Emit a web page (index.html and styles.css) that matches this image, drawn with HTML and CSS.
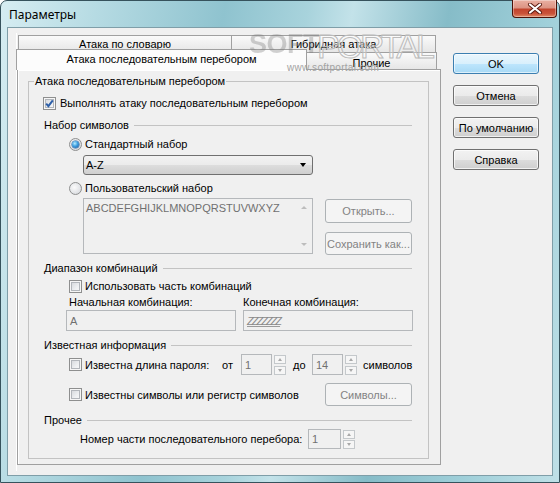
FILE: index.html
```html
<!DOCTYPE html>
<html lang="ru">
<head>
<meta charset="utf-8">
<title>Параметры</title>
<link rel="stylesheet" href="styles.css">
</head>
<body>
<div class="window">
  <div class="titlebar">
    <span class="title">Параметры</span>
    <div class="close">
      <svg width="16" height="11" viewBox="0 0 16 11"><path d="M3 1.5 L13 9.5 M13 1.5 L3 9.5" stroke="#5a1a10" stroke-width="4" stroke-linecap="round"/><path d="M3 1.5 L13 9.5 M13 1.5 L3 9.5" stroke="#ffffff" stroke-width="2.2" stroke-linecap="round"/></svg>
    </div>
  </div>
  <div class="client">
    <div class="sheet">
      <div class="tabs">
        <div class="tabrow back">
          <div class="tab t1">Атака по словарю</div>
          <div class="tab t2">Гибридная атака</div>
        </div>
        <div class="tabrow front">
          <div class="tab sel">Атака последовательным перебором</div>
          <div class="tab t4">Прочие</div>
        </div>
      </div>
      <div class="panel">
        <div class="group">
          <div class="legend">Атака последовательным перебором</div>

          <div class="row r-main">
            <span class="cb checked"><svg width="11" height="11" viewBox="0 0 11 11"><path d="M2.2 5.6 L4.4 8.2 L8.8 2.4" fill="none" stroke="#2d5fa8" stroke-width="2"/></svg></span>
            <span class="lbl first">Выполнять атаку последовательным перебором</span>
          </div>

          <div class="section s1"><span class="stext">Набор символов</span><span class="sline"></span></div>

          <div class="row r-radio1 indent">
            <span class="radio on"><span class="dot"></span></span>
            <span class="lbl first">Стандартный набор</span>
          </div>

          <div class="combo"><span>A-Z</span><span class="arrow"></span></div>

          <div class="row r-radio2 indent">
            <span class="radio"></span>
            <span class="lbl first">Пользовательский набор</span>
          </div>

          <div class="charset">
            <div class="textarea">
              <span class="tatext">ABCDEFGHIJKLMNOPQRSTUVWXYZ</span>
              <div class="vscroll"><span class="sa up"></span><span class="sa down"></span></div>
            </div>
            <div class="sidebtns">
              <div class="btn dis b-open">Открыть...</div>
              <div class="btn dis b-save">Сохранить как...</div>
            </div>
          </div>

          <div class="section s2"><span class="stext">Диапазон комбинаций</span><span class="sline"></span></div>

          <div class="row r-part indent">
            <span class="cb"></span>
            <span class="lbl first">Использовать часть комбинаций</span>
          </div>

          <div class="labels">
            <span class="lab1">Начальная комбинация:</span>
            <span class="lab2">Конечная комбинация:</span>
          </div>

          <div class="inputs">
            <div class="edit e1">A</div>
            <div class="edit e2"><span class="zz">ZZZZZZZ</span></div>
          </div>

          <div class="section s3"><span class="stext">Известная информация</span><span class="sline"></span></div>

          <div class="row r-len indent">
            <span class="cb"></span>
            <span class="lbl first len">Известна длина пароля:</span>
            <span class="lbl from">от</span>
            <div class="edit num n1">1</div>
            <div class="spin"><span class="sp up"></span><span class="sp down"></span></div>
            <span class="lbl to">до</span>
            <div class="edit num n2">14</div>
            <div class="spin"><span class="sp up"></span><span class="sp down"></span></div>
            <span class="lbl sym">символов</span>
          </div>

          <div class="row r-chars indent">
            <span class="cb"></span>
            <span class="lbl first chars">Известны символы или регистр символов</span>
            <div class="btn dis b-sym">Символы...</div>
          </div>

          <div class="section s4"><span class="stext">Прочее</span><span class="sline"></span></div>

          <div class="row r-part2">
            <span class="lbl partlbl">Номер части последовательного перебора:</span>
            <div class="edit num n3">1</div>
            <div class="spin"><span class="sp up"></span><span class="sp down"></span></div>
          </div>
        </div>
      </div>
    </div>
    <div class="buttons">
      <div class="btn def">OK</div>
      <div class="btn">Отмена</div>
      <div class="btn">По умолчанию</div>
      <div class="btn">Справка</div>
    </div>
  </div>
  <div class="watermark">
    <span class="wm-soft">SOFT</span>
    <span class="wm-portal">PORTAL</span>
    <span class="wm-url">www.softportal.com</span>
  </div>
</div>
</body>
</html>
```

FILE: styles.css
```css
* { box-sizing: border-box; }
html, body { margin: 0; padding: 0; }
body {
  width: 560px; height: 483px; overflow: hidden;
  font-family: "Liberation Sans", Arial, sans-serif;
  font-size: 11px; color: #000; background: #ffffff;
}
.window {
  position: relative;
  width: 560px; height: 483px;
  border: 1px solid #36525c;
  border-radius: 7px 7px 0 0;
  background: linear-gradient(100deg, #d6edf2 0%, #b6dbe3 15%, #8fc3cf 35%, #a8d3dc 48%, #c3e2e9 55%, #86bcc8 70%, #9fcfd9 85%, #bfe0e7 100%);
  display: flex; flex-direction: column;
}
.titlebar {
  height: 26px; display: flex; justify-content: space-between; align-items: flex-start;
}
.title {
  margin: 6px 0 0 8px; line-height: 16px;
  font-family: "Noto Sans", "Open Sans", sans-serif; font-size: 12px; color: #000;
}
.close {
  width: 45px; height: 18px; margin: -1px 2px 0 0;
  border: 1px solid #4b1208; border-top: none;
  border-radius: 0 0 4px 4px;
  background: linear-gradient(#eab0a2 0%, #dc9484 45%, #c2452e 55%, #c9533a 80%, #e08a66 100%);
  box-shadow: inset 0 0 0 1px rgba(255,255,255,0.35);
  display: flex; align-items: center; justify-content: center;
}
.client {
  height: 449px; margin: 0 6px; border: 1px solid #7f9ea8;
  background: #f0f0f0;
  display: flex; align-items: flex-start;
}
.sheet {
  width: 425px; height: 438px; margin: 5px 0 0 8px;
  display: flex; flex-direction: column;
  border-left: 1px solid #ffffff;
}
.tabs { height: 36px; display: flex; flex-direction: column; }
.tabrow { display: flex; }
.tabrow.back { margin: 2px 0 0 1px; height: 17px; }
.tabrow.front { margin: -3px 0 0 -1px; height: 20px; position: relative; z-index: 2; align-items: flex-start; }
.tab {
  display: flex; align-items: center; justify-content: center;
  border: 1px solid #a0a0a0; border-bottom: none;
  background: linear-gradient(#fafafa, #e6e6e6);
  height: 100%;
}
.t1 { width: 214px; }
.t2 { width: 205px; margin-left: -1px; }
.sel { width: 291px; height: 21px; background: #fcfcfc; padding-bottom: 3px; }
.t4 { width: 131px; height: 17px; margin-top: 3px; margin-left: -1px; padding-top: 4px; }
.panel {
  border: 1px solid #a0a0a0;
  height: 396px; flex: none;
  background: #f0f0f0;
  box-shadow: inset 1px 1px 0 #ffffff;
  padding: 11px 11px 0 10px;
}
.group {
  border: 1px solid #c3c3c3; height: 378px;
}
.legend {
  display: table; margin: -8px 0 0 5px; padding: 0 1px;
  background: #f0f0f0; line-height: 14px;
}
.row { display: flex; align-items: center; }
.lbl { white-space: nowrap; line-height: 14px; flex: none; }
.indent { padding-left: 40px; }
.lbl.first { margin-left: 3px; }
.r-main { height: 16px; margin-top: 7px; padding-left: 14px; }
.r-main .lbl.first { margin-left: 4px; }
.cb {
  width: 13px; height: 13px; flex: none;
  border: 1px solid #8e8f8f;
  background: linear-gradient(135deg, #cfd2d6 0%, #eef0f2 60%, #fbfbfb 100%);
  box-shadow: inset 0 0 0 1px #f6f6f6, inset 0 0 0 2px #b2b6bb;
  display: flex; align-items: center; justify-content: center;
}
.cb svg { display: block; }
.radio {
  width: 13px; height: 13px; flex: none; border-radius: 50%;
  border: 1px solid #8e8f8f;
  background: radial-gradient(circle at 40% 40%, #fbfbfb 0%, #e2e4e7 60%, #c9cdd2 100%);
  display: flex; align-items: center; justify-content: center;
}
.radio .dot {
  width: 7px; height: 7px; border-radius: 50%;
  background: radial-gradient(circle at 40% 35%, #b8ecff 0%, #3d9ee0 45%, #1b4f93 100%);
  box-shadow: 0 0 0 0.5px #2a5f9e;
}
.section { display: flex; align-items: center; height: 14px; padding: 0 16px 0 15px; }
.stext { white-space: nowrap; line-height: 14px; margin-right: 5px; }
.sline { flex: 1; height: 1px; background: #c3c3c3; }
.s1 { margin-top: 7px; }
.r-radio1 { height: 16px; margin-top: 4px; }
.combo {
  width: 230px; height: 20px; margin: 3px 0 0 54px;
  border: 1px solid #707070; border-radius: 3px;
  background: linear-gradient(#f2f2f2 0%, #ebebeb 50%, #dddddd 51%, #cfcfcf 100%);
  display: flex; align-items: center; justify-content: space-between;
  padding: 0 6px 0 2px;
}
.arrow {
  width: 0; height: 0;
  border-left: 3.5px solid transparent; border-right: 3.5px solid transparent;
  border-top: 4px solid #000;
}
.r-radio2 { height: 16px; margin-top: 5px; }
.charset { display: flex; height: 57px; margin: 2px 0 0 54px; }
.textarea {
  width: 230px; height: 56px; border: 1px solid #b5b8bb; background: #f0f0f0;
  display: flex; justify-content: space-between;
  color: #707070;
}
.tatext { padding: 3px 0 0 2px; line-height: 13px; }
.vscroll { width: 17px; display: flex; flex-direction: column; justify-content: space-between; align-items: center; padding: 7px 0 7px; }
.sa { width: 0; height: 0; border-left: 3.5px solid transparent; border-right: 3.5px solid transparent; }
.sa.up { border-bottom: 3.5px solid #bdbdbd; }
.sa.down { border-top: 3.5px solid #bdbdbd; }
.sidebtns { display: flex; flex-direction: column; margin-left: 12px; }
.btn {
  height: 21px; border: 1px solid #707070; border-radius: 3px;
  background: linear-gradient(#f2f2f2 0%, #ebebeb 50%, #dddddd 51%, #cfcfcf 100%);
  box-shadow: inset 0 0 0 1px rgba(255,255,255,0.7);
  display: flex; align-items: center; justify-content: center; white-space: nowrap;
  flex: none;
}
.btn.dis {
  border-color: #adb2b5; background: #f4f4f4; color: #838383; box-shadow: none;
}
.b-open { width: 87px; height: 24px; margin-top: 1px; }
.b-save { width: 87px; height: 23px; margin-top: 9px; }
.s2 { margin-top: 6px; }
.r-part { height: 16px; margin-top: 3px; }
.labels { display: flex; height: 14px; margin-top: 1px; padding-left: 40px; line-height: 14px; }
.lab1 { width: 174px; }
.inputs { display: flex; height: 21px; margin: 1px 0 0 37px; }
.edit {
  height: 21px; border: 1px solid #b5b8bb; background: #f0f0f0; color: #707070;
  display: flex; align-items: center; padding-left: 3px; white-space: nowrap; flex: none;
}
.e1 { width: 170px; }
.e2 { width: 170px; margin-left: 7px; }
.zz { letter-spacing: -2px; font-style: italic; text-decoration: underline; text-decoration-color: #9a9a9a; color: #8a8a8a; }
.s3 { margin-top: 7px; }
.r-len { height: 21px; margin-top: 2px; }
.len { width: 137px; }
.from { width: 19px; }
.num { width: 31px; height: 21px; }
.spin { display: flex; flex-direction: column; justify-content: space-between; height: 20px; width: 12px; margin-left: 2px; flex: none; }
.sp {
  height: 9px; border: 1px solid #c4c8cb; background: #f6f6f6; position: relative;
}
.sp::after {
  content: ""; position: absolute; left: 2.5px; width: 0; height: 0;
  border-left: 2.5px solid transparent; border-right: 2.5px solid transparent;
}
.sp.up::after { top: 2px; border-bottom: 3px solid #a8a8a8; }
.sp.down::after { top: 2px; border-top: 3px solid #a8a8a8; }
.to { width: 19px; margin-left: 7px; }
.sym { margin-left: 6px; }
.r-chars { height: 23px; margin-top: 8px; }
.chars { width: 240px; }
.b-sym { width: 87px; height: 23px; }
.s4 { margin-top: 7px; }
.r-part2 { height: 20px; margin-top: 2px; padding-left: 51px; }
.partlbl { width: 228px; }
.n3 { width: 33px; height: 20px; }
.r-part2 .spin { height: 19px; margin-left: 2px; }
.buttons { display: flex; flex-direction: column; gap: 11px; margin: 25px 0 0 12px; }
.buttons .btn { width: 86px; }
.btn.def {
  border-color: #3c7fb1;
  background: linear-gradient(#eaf6fd 0%, #d9f0fc 50%, #bee6fd 51%, #a7d9f5 100%);
  box-shadow: inset 0 0 0 1px rgba(255,255,255,0.6);
}
.watermark { position: absolute; z-index: 5; left: 248px; top: 31px; width: 190px; height: 44px; pointer-events: none; }
.wm-soft {
  position: absolute; left: 0; top: -1px;
  font-family: "Liberation Sans", Arial, sans-serif; font-weight: bold; font-size: 27px; line-height: 27px;
  letter-spacing: -0.5px;
  color: transparent;
  background-image: radial-gradient(circle, rgba(120,120,120,0.6) 0.6px, transparent 0.85px);
  background-size: 2px 2px;
  -webkit-background-clip: text; background-clip: text;
}
.wm-portal {
  position: absolute; left: 68px; top: -3px;
  font-family: "Liberation Sans", Arial, sans-serif; font-size: 34px; letter-spacing: -3px;
  color: rgba(255,255,255,0.25); -webkit-text-stroke: 1px #bbbbbb; line-height: 34px;
}
.wm-url {
  position: absolute; left: 38px; top: 30px; font-size: 10px; color: #a3a3a3; letter-spacing: 0.3px;
}
```
